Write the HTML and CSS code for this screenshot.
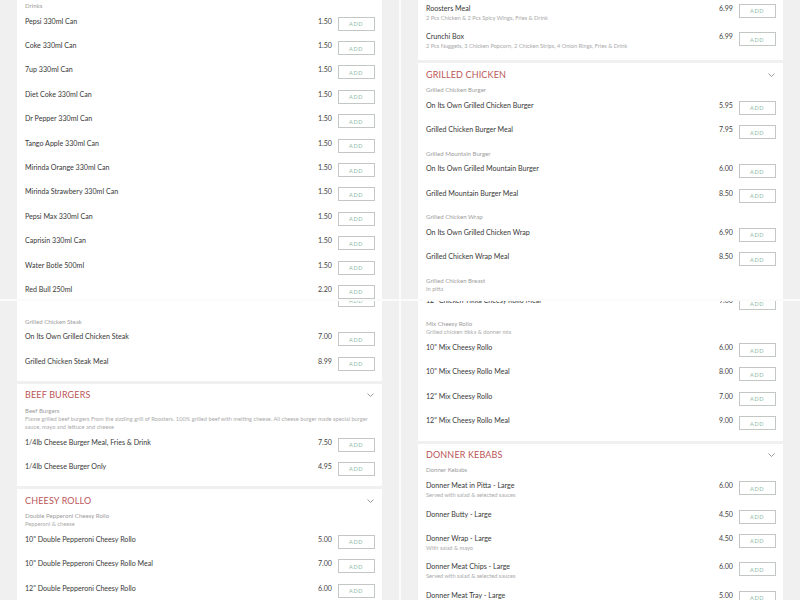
FILE: index.html
```html
<!DOCTYPE html>
<html lang="en">
<head>
    <meta charset="UTF-8">
    <meta name="viewport" content="width=device-width, initial-scale=1.0">
    <title>Roosters Menu</title>
    <link rel="stylesheet" href="styles.css">
</head>

<body>
    <div class="collage">
        <!-- Drinks -->
        <div class="shot">
            <div class="feed feed-tl">
                <section class="card">
                    <p class="group">Drinks</p>
                    <div class="item"><div class="info"><span class="name">Pepsi 330ml Can</span></div><span class="price">1.50</span><button class="add">ADD</button></div>
                    <div class="item"><div class="info"><span class="name">Coke 330ml Can</span></div><span class="price">1.50</span><button class="add">ADD</button></div>
                    <div class="item"><div class="info"><span class="name">7up 330ml Can</span></div><span class="price">1.50</span><button class="add">ADD</button></div>
                    <div class="item"><div class="info"><span class="name">Diet Coke 330ml Can</span></div><span class="price">1.50</span><button class="add">ADD</button></div>
                    <div class="item"><div class="info"><span class="name">Dr Pepper 330ml Can</span></div><span class="price">1.50</span><button class="add">ADD</button></div>
                    <div class="item"><div class="info"><span class="name">Tango Apple 330ml Can</span></div><span class="price">1.50</span><button class="add">ADD</button></div>
                    <div class="item"><div class="info"><span class="name">Mirinda Orange 330ml Can</span></div><span class="price">1.50</span><button class="add">ADD</button></div>
                    <div class="item"><div class="info"><span class="name">Mirinda Strawbery 330ml Can</span></div><span class="price">1.50</span><button class="add">ADD</button></div>
                    <div class="item"><div class="info"><span class="name">Pepsi Max 330ml Can</span></div><span class="price">1.50</span><button class="add">ADD</button></div>
                    <div class="item"><div class="info"><span class="name">Caprisin 330ml Can</span></div><span class="price">1.50</span><button class="add">ADD</button></div>
                    <div class="item"><div class="info"><span class="name">Water Botle 500ml</span></div><span class="price">1.50</span><button class="add">ADD</button></div>
                    <div class="item"><div class="info"><span class="name">Red Bull 250ml</span></div><span class="price">2.20</span><button class="add">ADD</button></div>
                </section>
            </div>
        </div>

        <!-- Meals / Grilled chicken -->
        <div class="shot">
            <div class="feed feed-tr">
                <section class="card">
                    <div class="item"><div class="info"><span class="name">Roosters Meal</span><span class="desc">2 Pcs Chicken &amp; 2 Pcs Spicy Wings, Fries &amp; Drink</span></div><span class="price">6.99</span><button class="add">ADD</button></div>
                    <div class="item"><div class="info"><span class="name">Crunchi Box</span><span class="desc">2 Pcs Nuggets, 3 Chicken Popcorn, 2 Chicken Strips, 4 Onion Rings, Fries &amp; Drink</span></div><span class="price">6.99</span><button class="add">ADD</button></div>
                </section>
                <section class="card">
                    <div class="card-head">
                        <h3>GRILLED CHICKEN</h3>
                        <svg class="chevron" width="7" height="4" viewBox="0 0 7 4"><path d="M0.5 0.5L3.5 3.5L6.5 0.5"/></svg>
                    </div>
                    <p class="group">Grilled Chicken Burger</p>
                    <div class="item"><div class="info"><span class="name">On Its Own Grilled Chicken Burger</span></div><span class="price">5.95</span><button class="add">ADD</button></div>
                    <div class="item"><div class="info"><span class="name">Grilled Chicken Burger Meal</span></div><span class="price">7.95</span><button class="add">ADD</button></div>
                    <p class="group">Grilled Mountain Burger</p>
                    <div class="item"><div class="info"><span class="name">On Its Own Grilled Mountain Burger</span></div><span class="price">6.00</span><button class="add">ADD</button></div>
                    <div class="item"><div class="info"><span class="name">Grilled Mountain Burger Meal</span></div><span class="price">8.50</span><button class="add">ADD</button></div>
                    <p class="group">Grilled Chicken Wrap</p>
                    <div class="item"><div class="info"><span class="name">On Its Own Grilled Chicken Wrap</span></div><span class="price">6.90</span><button class="add">ADD</button></div>
                    <div class="item"><div class="info"><span class="name">Grilled Chicken Wrap Meal</span></div><span class="price">8.50</span><button class="add">ADD</button></div>
                    <p class="group">Grilled Chicken Breast<span class="note">In pitta</span></p>
                    <div class="item"><div class="info"><span class="name">On Its Own Grilled Chicken Breast</span></div><span class="price">6.50</span><button class="add">ADD</button></div>
                </section>
            </div>
        </div>

        <!-- Steak / Beef burgers / Cheesy rollo -->
        <div class="shot">
            <div class="feed feed-bl">
                <section class="card">
                    <div class="item"><div class="info"><span class="name">Grilled Chicken Breast Meal</span></div><span class="price">8.50</span><button class="add">ADD</button></div>
                    <p class="group">Grilled Chicken Steak</p>
                    <div class="item"><div class="info"><span class="name">On Its Own Grilled Chicken Steak</span></div><span class="price">7.00</span><button class="add">ADD</button></div>
                    <div class="item"><div class="info"><span class="name">Grilled Chicken Steak Meal</span></div><span class="price">8.99</span><button class="add">ADD</button></div>
                </section>
                <section class="card">
                    <div class="card-head">
                        <h3>BEEF BURGERS</h3>
                        <svg class="chevron" width="7" height="4" viewBox="0 0 7 4"><path d="M0.5 0.5L3.5 3.5L6.5 0.5"/></svg>
                    </div>
                    <p class="group">Beef Burgers<span class="note">Flame grilled beef burgers From the sizzling grill of Roosters. 100% grilled beef with melting cheese. All cheese burger made special burger sauce, mayo and lettuce and cheese</span></p>
                    <div class="item"><div class="info"><span class="name">1/4lb Cheese Burger Meal, Fries &amp; Drink</span></div><span class="price">7.50</span><button class="add">ADD</button></div>
                    <div class="item"><div class="info"><span class="name">1/4lb Cheese Burger Only</span></div><span class="price">4.95</span><button class="add">ADD</button></div>
                </section>
                <section class="card">
                    <div class="card-head">
                        <h3>CHEESY ROLLO</h3>
                        <svg class="chevron" width="7" height="4" viewBox="0 0 7 4"><path d="M0.5 0.5L3.5 3.5L6.5 0.5"/></svg>
                    </div>
                    <p class="group">Double Pepperoni Cheesy Rollo<span class="note">Pepperoni &amp; cheese</span></p>
                    <div class="item"><div class="info"><span class="name">10" Double Pepperoni Cheesy Rollo</span></div><span class="price">5.00</span><button class="add">ADD</button></div>
                    <div class="item"><div class="info"><span class="name">10" Double Pepperoni Cheesy Rollo Meal</span></div><span class="price">7.00</span><button class="add">ADD</button></div>
                    <div class="item"><div class="info"><span class="name">12" Double Pepperoni Cheesy Rollo</span></div><span class="price">6.00</span><button class="add">ADD</button></div>
                </section>
            </div>
        </div>

        <!-- Mix cheesy rollo / Donner kebabs -->
        <div class="shot">
            <div class="feed feed-br">
                <section class="card">
                    <div class="item"><div class="info"><span class="name">12" Chicken Tikka Cheesy Rollo Meal</span></div><span class="price">9.00</span><button class="add">ADD</button></div>
                    <p class="group">Mix Cheesy Rollo<span class="note">Grilled chicken tikka &amp; donner mix</span></p>
                    <div class="item"><div class="info"><span class="name">10" Mix Cheesy Rollo</span></div><span class="price">6.00</span><button class="add">ADD</button></div>
                    <div class="item"><div class="info"><span class="name">10" Mix Cheesy Rollo Meal</span></div><span class="price">8.00</span><button class="add">ADD</button></div>
                    <div class="item"><div class="info"><span class="name">12" Mix Cheesy Rollo</span></div><span class="price">7.00</span><button class="add">ADD</button></div>
                    <div class="item"><div class="info"><span class="name">12" Mix Cheesy Rollo Meal</span></div><span class="price">9.00</span><button class="add">ADD</button></div>
                </section>
                <section class="card">
                    <div class="card-head">
                        <h3>DONNER KEBABS</h3>
                        <svg class="chevron" width="7" height="4" viewBox="0 0 7 4"><path d="M0.5 0.5L3.5 3.5L6.5 0.5"/></svg>
                    </div>
                    <p class="group">Donner Kebabs</p>
                    <div class="item"><div class="info"><span class="name">Donner Meat in Pitta - Large</span><span class="desc">Served with salad &amp; selected sauces</span></div><span class="price">6.00</span><button class="add">ADD</button></div>
                    <div class="item"><div class="info"><span class="name">Donner Butty - Large</span></div><span class="price">4.50</span><button class="add">ADD</button></div>
                    <div class="item"><div class="info"><span class="name">Donner Wrap - Large</span><span class="desc">With salad &amp; mayo</span></div><span class="price">4.50</span><button class="add">ADD</button></div>
                    <div class="item"><div class="info"><span class="name">Donner Meat Chips - Large</span><span class="desc">Served with salad &amp; selected sauces</span></div><span class="price">6.00</span><button class="add">ADD</button></div>
                    <div class="item"><div class="info"><span class="name">Donner Meat Tray - Large</span></div><span class="price">5.00</span><button class="add">ADD</button></div>
                </section>
            </div>
        </div>
    </div>
</body>

</html>
```

FILE: styles.css
```css
/* Page: four scrolled phone captures side by side */
* {
    box-sizing: border-box;
}

body {
    margin: 0;
    font-family: Lato, "Open Sans", sans-serif;
    background: #fbfbfb;
    /* thin light seams between the captures */
}

.collage {
    display: grid;
    grid-template-columns: 399px 399px;
    grid-template-rows: 299px 299px;
    gap: 2px;
}

.shot {
    background: #f0f0f0;
    overflow: hidden;
    padding: 0 17px;
}

/* scroll position of each capture */
.feed-tl {
    margin-top: -1px;
}

.feed-tr .card:first-child {
    padding-top: 0.7px;
}

.feed-bl {
    margin-top: -10.8px;
}

.feed-br {
    margin-top: -8px;
}

/* Cards */
.card {
    background: #fff;
    padding: 0 7.5px 3px 8px;
    margin-bottom: 3px;
}

.card-head {
    display: flex;
    justify-content: space-between;
    align-items: center;
    padding: 5.2px 0.5px 2.6px 0;
}

.card-head h3 {
    margin: 0;
    font-size: 9px;
    line-height: 12px;
    font-weight: normal;
    letter-spacing: 0.15px;
    color: #bb5558;
    /* muted red section titles */
}

.chevron {
    display: block;
    fill: none;
    stroke: #8e8e8e;
    stroke-width: 0.9;
}

.group {
    margin: 0;
    padding: 3px 0 3.7px;
    font-size: 6.1px;
    line-height: 8px;
    color: #9c9c9c;
}

.group .note {
    display: block;
    font-size: 5.7px;
    color: #ababab;
}

/* Menu rows */
.item {
    display: flex;
    align-items: flex-start;
    padding: 3px 0 7.4px;
}

.info {
    flex: 1;
    min-width: 0;
}

.name {
    display: block;
    font-size: 7.1px;
    line-height: 10px;
    color: #383838;
    white-space: nowrap;
}

.desc {
    display: block;
    font-size: 5.7px;
    line-height: 8px;
    color: #a9a9a9;
    white-space: nowrap;
}

.price {
    font-size: 7.1px;
    line-height: 10px;
    color: #434343;
}

.add {
    width: 37px;
    height: 14px;
    margin-left: 5.6px;
    padding: 0;
    border: 1px solid #c2c7c4;
    border-radius: 0;
    background: #fff;
    font-family: Lato, "Open Sans", sans-serif;
    font-size: 5.6px;
    letter-spacing: 0.5px;
    color: #8fb9a6;
    /* pale green button label */
    cursor: pointer;
}
```
